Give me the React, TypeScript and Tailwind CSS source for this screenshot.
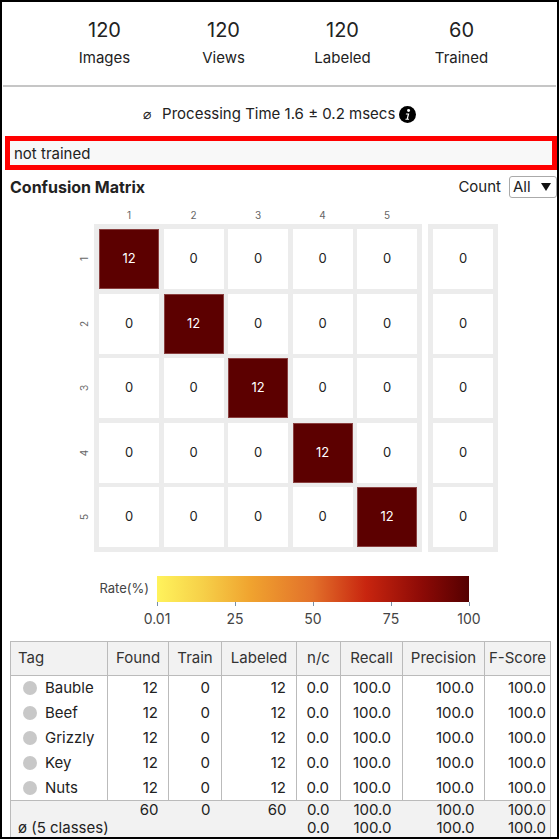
const stats = [
  { value: '120', label: 'Images' },
  { value: '120', label: 'Views' },
  { value: '120', label: 'Labeled' },
  { value: '60', label: 'Trained' },
];

const tags = ['Bauble', 'Beef', 'Grizzly', 'Key', 'Nuts'];
const idx = [1, 2, 3, 4, 5];
const ticks = ['0.01', '25', '50', '75', '100'];

function InfoIcon() {
  return (
    <svg width="17" height="17" viewBox="0 0 16 16" className="shrink-0">
      <circle cx="8" cy="8" r="8" fill="#000" />
      <circle cx="9" cy="4.3" r="1.4" fill="#fff" />
      <path d="M6.6 7.1h3.1l-1.3 5h1.1l-.2.9H6l.2-.9h1l1-4.1H6.4z" fill="#fff" />
    </svg>
  );
}

function MatrixCell({ value }: { value: number }) {
  const hot = value > 0;
  return (
    <div
      className={
        hot
          ? 'w-[60px] h-[60px] flex items-center justify-center bg-[#5c0000] border border-[#8a4040] text-white text-[13px]'
          : 'w-[60px] h-[60px] flex items-center justify-center bg-white text-[#222] text-[13px]'
      }
    >
      {value}
    </div>
  );
}

export default function App() {
  return (
    <div className="w-[559px] h-[839px] overflow-hidden border-2 border-black bg-white text-[#222] flex flex-col font-['Inter','DejaVu_Sans',sans-serif]">
      {/* stats */}
      <div className="h-[83px] shrink-0 flex justify-center pt-[16px] pl-[7px]">
        {stats.map((s) => (
          <div key={s.label} className="w-[119px] flex flex-col items-center">
            <div className="text-[20px] leading-[24px]">{s.value}</div>
            <div className="mt-[6px] text-[15px] leading-[20px]">{s.label}</div>
          </div>
        ))}
      </div>
      <div className="h-[2px] shrink-0 mx-[1px] bg-[#c6c6c6]" />

      {/* processing time */}
      <div className="h-[49px] shrink-0 pt-[17px] flex justify-center">
        <div className="flex items-center h-[20px] text-[15px] leading-[20px]">
          <span className="mr-[11px] font-['DejaVu_Sans',sans-serif] text-[14px]">⌀</span>
          <span>Processing Time 1.6 ± 0.2 msecs</span>
          <span className="ml-[4px]">
            <InfoIcon />
          </span>
        </div>
      </div>

      {/* status */}
      <div className="ml-[3px] h-[34px] shrink-0 border-[5px] border-[#ff0000]">
        <div className="h-full bg-[#f8f8f8] pl-[4px] text-[15px] leading-[26px]">not trained</div>
      </div>

      {/* matrix header */}
      <div className="mt-[6px] h-[22px] shrink-0 flex items-center justify-between pl-[8px]">
        <h2 className="text-[16px] font-bold leading-[20px]">Confusion Matrix</h2>
        <div className="flex items-center gap-[8px]">
          <span className="text-[15px]">Count</span>
          <div className="h-[22px] w-[48px] border border-[#aaa] rounded-[3px] flex items-center justify-between pl-[3px] pr-[5px]">
            <span className="text-[15px] leading-[20px]">All</span>
            <svg width="10" height="8" viewBox="0 0 10 8">
              <path d="M0 0h10L5 8z" fill="#111" />
            </svg>
          </div>
        </div>
      </div>

      {/* column labels */}
      <div className="mt-[11px] h-[12px] shrink-0 ml-[97px] grid grid-cols-[repeat(5,60px)] gap-x-[4.5px] text-[10px] leading-[12px] text-[#666] text-center">
        {idx.map((i) => (
          <span key={i}>{i}</span>
        ))}
      </div>

      {/* matrix */}
      <div className="mt-[3px] shrink-0 flex ml-[72px]">
        <div className="w-[20px] pt-[5px] flex flex-col gap-[4.5px]">
          {idx.map((i) => (
            <div key={i} className="h-[60px] flex items-center justify-center">
              <span className="-rotate-90 text-[10px] leading-[12px] text-[#666]">{i}</span>
            </div>
          ))}
        </div>
        <div className="bg-[#ececec] p-[5px] grid grid-cols-[repeat(5,60px)] gap-[4.5px]">
          {idx.map((r) => idx.map((c) => <MatrixCell key={`${r}-${c}`} value={r === c ? 12 : 0} />))}
        </div>
        <div className="ml-[6px] bg-[#ececec] p-[5px] flex flex-col gap-[4.5px]">
          {idx.map((i) => (
            <MatrixCell key={i} value={0} />
          ))}
        </div>
      </div>

      {/* legend */}
      <div className="mt-[24px] shrink-0 flex items-center">
        <span className="w-[155px] pr-[8px] text-right text-[13px] text-[#444]">Rate(%)</span>
        <div className="w-[312px] h-[26px] bg-[linear-gradient(to_right,#fff35c_0%,#f6cf48_15%,#f0a32f_30%,#e2702a_50%,#c8250f_67%,#8c0a06_85%,#550000_100%)]" />
      </div>
      <div className="ml-[155px] w-[312px] shrink-0 flex justify-between">
        {ticks.map((t) => (
          <div key={t} className="w-0 flex flex-col items-center">
            <div className="w-px h-[4px] bg-[#7890a8]" />
            <span className="mt-[5px] text-[14px] leading-[16px] text-[#444] whitespace-nowrap">{t}</span>
          </div>
        ))}
      </div>

      {/* table */}
      <table className="mt-[14px] ml-[8px] w-[540px] shrink-0 table-fixed border-collapse border border-[#bbb] text-[15px]">
        <colgroup>
          <col className="w-[97px]" />
          <col className="w-[61px]" />
          <col className="w-[53px]" />
          <col className="w-[75px]" />
          <col className="w-[44px]" />
          <col className="w-[62px]" />
          <col className="w-[82px]" />
          <col className="w-[66px]" />
        </colgroup>
        <thead>
          <tr className="h-[34px] bg-[#f2f2f2] text-[#333]">
            <th className="border border-[#bbb] font-normal text-left pl-[7px]">Tag</th>
            {['Found', 'Train', 'Labeled', 'n/c', 'Recall', 'Precision', 'F-Score'].map((h) => (
              <th key={h} className="border border-[#bbb] font-normal text-center">
                {h}
              </th>
            ))}
          </tr>
        </thead>
        <tbody>
          {tags.map((t) => (
            <tr key={t} className="h-[25px]">
              <td className="border-x border-[#bbb] pl-[12px]">
                <div className="flex items-center gap-[8px]">
                  <span className="w-[14px] h-[14px] rounded-full bg-[#c8c8c8]" />
                  <span>{t}</span>
                </div>
              </td>
              <td className="border-x border-[#bbb] text-right pr-[10px]">12</td>
              <td className="border-x border-[#bbb] text-right pr-[11px]">0</td>
              <td className="border-x border-[#bbb] text-right pr-[10px]">12</td>
              <td className="border-x border-[#bbb] text-right pr-[11px]">0.0</td>
              <td className="border-x border-[#bbb] text-right pr-[11px]">100.0</td>
              <td className="border-x border-[#bbb] text-right pr-[10px]">100.0</td>
              <td className="border-x border-[#bbb] text-right pr-[4px]">100.0</td>
            </tr>
          ))}
        </tbody>
        <tfoot className="bg-[#f2f2f2] border-t border-[#bbb]">
          <tr className="h-[18px] leading-[18px]">
            <td />
            <td className="text-right pr-[10px]">60</td>
            <td className="text-right pr-[11px]">0</td>
            <td className="text-right pr-[10px]">60</td>
            <td className="text-right pr-[11px]">0.0</td>
            <td className="text-right pr-[11px]">100.0</td>
            <td className="text-right pr-[10px]">100.0</td>
            <td className="text-right pr-[4px]">100.0</td>
          </tr>
          <tr className="h-[18px] leading-[18px]">
            <td colSpan={4} className="pl-[7px]">
              ø (5 classes)
            </td>
            <td className="text-right pr-[11px]">0.0</td>
            <td className="text-right pr-[11px]">100.0</td>
            <td className="text-right pr-[10px]">100.0</td>
            <td className="text-right pr-[4px]">100.0</td>
          </tr>
        </tfoot>
      </table>
    </div>
  );
}
